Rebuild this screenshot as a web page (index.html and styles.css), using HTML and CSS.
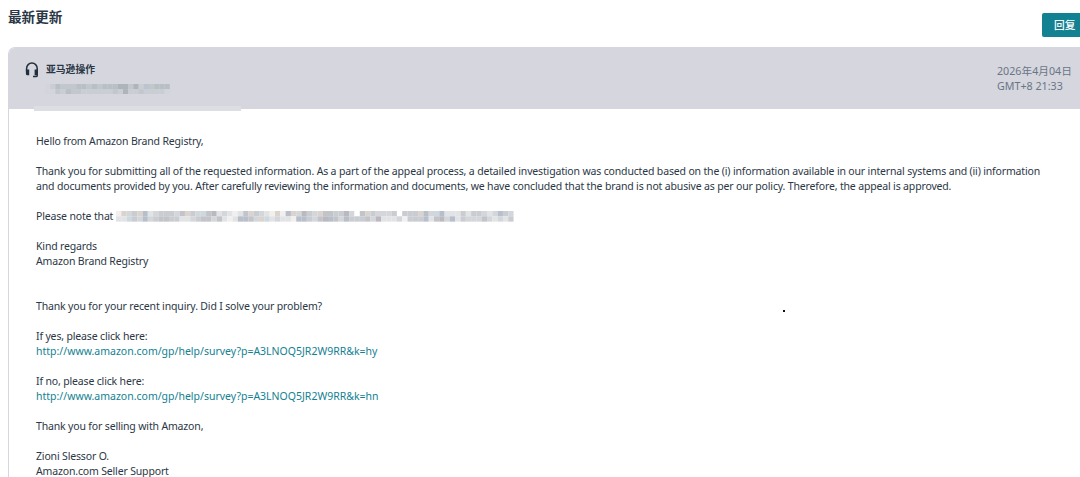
FILE: index.html
```html
<!DOCTYPE html>
<html lang="zh-CN">
<head>
  <meta charset="UTF-8">
  <title>最新更新</title>
  <link rel="stylesheet" href="styles.css">
</head>
<body>
  <header class="topbar">
    <h1>最新更新</h1>
    <button class="replyButton">回复</button>
  </header>

  <section class="message">
    <div class="messageHeader">
      <svg class="headset" viewBox="0 0 14 16" fill="none" stroke="#232f3e">
        <path d="M1.600 9.500V6.500a5.300 5.500 0 0 1 10.600 0v6.900q0 1.200-1.200 1.200H8" stroke-width="1.500"/>
        <path d="M.9 7.600h3.300v5.700H2.500Q.9 13.300.9 11.700zM9.600 7.600h3.300v4.100q0 1.600-1.600 1.600H9.600z" fill="#232f3e" stroke="none"/>
      </svg>
      <div class="sender">
        <strong>亚马逊操作</strong>
        <svg class="mosaic mosaicEmail" id="maskEmail"></svg>
      </div>
      <div class="date">2026年4月04日<br>GMT+8 21:33</div>
      <span class="strip"></span>
    </div>

    <div class="messageBody">
      <p>Hello from Amazon Brand Registry,</p>
      <p>Thank you for submitting all of the requested information. As a part of the appeal process, a detailed investigation was conducted based on the (i) information available in our internal systems and (ii) information<br>and documents provided by you. After carefully reviewing the information and documents, we have concluded that the brand is not abusive as per our policy. Therefore, the appeal is approved.</p>
      <p class="note"><span>Please note that</span><svg class="mosaic mosaicNote" id="maskNote"></svg></p>
      <p>Kind regards<br>Amazon Brand Registry</p>
      <p class="survey">Thank you for your recent inquiry. Did I solve your problem?</p>
      <p>If yes, please click here:<br><a href="#">http://www.amazon.com/gp/help/survey?p=A3LNOQ5JR2W9RR&amp;k=hy</a></p>
      <p>If no, please click here:<br><a href="#">http://www.amazon.com/gp/help/survey?p=A3LNOQ5JR2W9RR&amp;k=hn</a></p>
      <p>Thank you for selling with Amazon,</p>
      <p>Zioni Slessor O.<br>Amazon.com Seller Support</p>
      <span class="dot"></span>
    </div>
  </section>

  <script>
    // Masked text: one letter per cell, two rows of cells
    const noteColors = {
      a: "#f1f0ef", b: "#e1e3e5", c: "#d3d6da", d: "#c9cdd1", e: "#c2c4c9",
      f: "#b7bfcb", g: "#ccd9de", h: "#dbd3cd", i: "#bcb8bf", j: "#ffffff"
    };
    const emailColors = {
      a: "#d3d4dc", b: "#cacdd3", c: "#c2c7cc", d: "#b9c0c5", e: "#adb4ba", f: "#bdc4d0"
    };

    function drawMask(id, rows, colors, size) {
      const svg = document.getElementById(id);
      rows.forEach((row, y) => {
        [...row].forEach((letter, x) => {
          const cell = document.createElementNS("http://www.w3.org/2000/svg", "rect");
          cell.setAttribute("x", x * size);
          cell.setAttribute("y", y * size);
          cell.setAttribute("width", size + 0.05);
          cell.setAttribute("height", size + 0.05);
          cell.setAttribute("fill", colors[letter]);
          svg.appendChild(cell);
        });
      });
    }

    drawMask("maskNote", [
      "ahcdhfbcdddcehdcgeibcbabehdcbahafhcidcheeddicgcddhejehccdgjdddhfcgfbbbdbcdcbdfdcba".slice(0, 45) + "jehdcccdjdddhfcgfbbbdbddcbcfdcb",
      "bbgdcfcdeeddbbcdeecebabffechgbcbbaffdceifecfdd" + "decibbbcadddfbeicfbdcccecbcbdedca"
    ].map(row => row.slice(0, 75)), noteColors, 5.3);

    drawMask("maskEmail", [
      "abdcccddcdcdddeecebfcddd",
      "aacbdccbbbbbbcbebbcbbbba"
    ], emailColors, 5.2);
  </script>
</body>
</html>
```
FILE: styles.css
```css
* {
  box-sizing: border-box;
}

body {
  margin: 0;
  height: 477px;
  overflow: hidden;
  background: #fff;
  color: #2b3745;
  font-family: "Noto Sans", "Noto Sans CJK SC", sans-serif;
  font-size: 10.5px;
  line-height: 15px;
}

.topbar {
  display: flex;
  justify-content: space-between;
  height: 47px;
  padding-left: 8px;
}

h1 {
  margin: 7px 0 0;
  font-family: "Noto Sans CJK SC", sans-serif;
  font-size: 13.6px;
  line-height: 19px;
}

.replyButton {
  width: 38px;
  height: 24px;
  margin-top: 13px;
  padding: 0 0 2px 12px;
  border: none;
  border-radius: 2px 0 0 2px;
  background: #128192;
  color: #fff;
  font-family: "Noto Sans CJK SC", sans-serif;
  font-size: 10.7px;
  font-weight: 500;
  text-align: left;
  white-space: nowrap;
}

.message {
  height: 440px;
  margin-left: 8px;
  border: 1px solid #d5d6de;
  border-right: none;
  border-radius: 7px 0 0 0;
}

.messageHeader {
  position: relative;
  display: flex;
  height: 61px;
  padding: 14px 8px 0 16px;
  border-radius: 6px 0 0 0;
  background: #d5d6de;
}

.headset {
  width: 14px;
  height: 16px;
}

.sender {
  flex: 1;
  padding-left: 7px;
}

.sender strong {
  display: block;
  font-family: "Noto Sans CJK SC", sans-serif;
  font-size: 9.8px;
}

.mosaic {
  display: block;
}

.mosaicEmail {
  width: 125px;
  height: 10.4px;
  margin: 7px 0 0 -1px;
}

.date {
  width: 75px;
  padding-top: 2px;
  color: #6a7585;
  font-size: 10.7px;
}

/* light bar over the bottom edge of the header */
.strip {
  position: absolute;
  left: 25px;
  bottom: -2px;
  width: 207px;
  height: 5px;
  background: #dddee4;
}

.messageBody {
  position: relative;
  padding: 25px 0 0 27px;
}

p {
  margin: 0 0 15px;
  letter-spacing: -0.16px;
  white-space: nowrap;
}

.note {
  display: flex;
}

.note span {
  width: 80px;
}

.mosaicNote {
  width: 399px;
  height: 10.6px;
  margin-top: 2px;
}

.survey {
  margin-top: 30px;
}

a {
  color: #128192;
  letter-spacing: 0;
  text-decoration: none;
}

.dot {
  position: absolute;
  left: 774px;
  top: 201px;
  width: 2px;
  height: 2px;
  background: #111;
}
```
